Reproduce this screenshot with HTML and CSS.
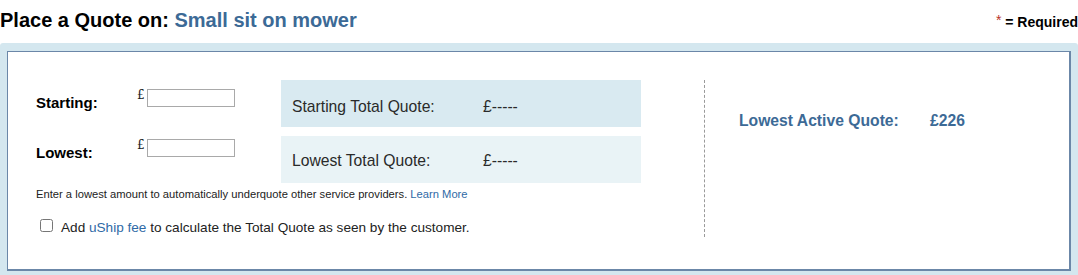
FILE: index.html
```html
<!DOCTYPE html>
<html lang="en">
<head>
    <meta charset="UTF-8">
    <title>Place a Quote</title>
    <link rel="stylesheet" href="styles.css">
</head>
<body>
    <div class="title-bar">
        <h1>Place a Quote on: <span class="item-name">Small sit on mower</span></h1>
        <div class="required"><span class="star">*</span> = Required</div>
    </div>

    <div class="quote-panel">
        <div class="quote-inner">
            <div class="quote-form">
                <div class="quote-grid">
                    <div class="entries">
                        <div class="entry-row">
                            <label class="entry-label" for="starting">Starting:</label>
                            <span class="pound">£</span>
                            <input type="text" id="starting" class="amount">
                        </div>
                        <div class="entry-row">
                            <label class="entry-label" for="lowest">Lowest:</label>
                            <span class="pound">£</span>
                            <input type="text" id="lowest" class="amount">
                        </div>
                    </div>
                    <div class="totals">
                        <div class="total-box total-start">
                            <span class="total-label">Starting Total Quote:</span><span>£-----</span>
                        </div>
                        <div class="total-box total-low">
                            <span class="total-label">Lowest Total Quote:</span><span>£-----</span>
                        </div>
                    </div>
                </div>
                <p class="hint">Enter a lowest amount to automatically underquote other service providers. <a href="#">Learn More</a></p>
                <label class="fee-check">
                    <input type="checkbox">
                    <span>Add <a href="#">uShip fee</a> to calculate the Total Quote as seen by the customer.</span>
                </label>
            </div>
            <div class="active-quote">
                <span class="active-label">Lowest Active Quote:</span><span>£226</span>
            </div>
        </div>
    </div>
</body>
</html>
```

FILE: styles.css
```css
body {
    font-family: "Liberation Sans", Arial, sans-serif;
    margin: 0;
    color: #000;
}
a {
    color: #2f6aa6;
    text-decoration: none;
}

/* titulo */
.title-bar {
    display: flex;
    justify-content: space-between;
    align-items: baseline;
    padding: 8px 0 11px;
}
h1 {
    margin: 0;
    font-size: 20px;
    line-height: 24px;
}
.item-name {
    color: #3c6a96;
}
.required {
    font-size: 14px;
    font-weight: bold;
}
.star {
    color: #b9352a;
    font-weight: normal;
    vertical-align: 2px;
}

/* painel */
.quote-panel {
    background-color: #d4e7ef;
    padding: 8px 7px;
    border-radius: 3px;
}
.quote-inner {
    display: flex;
    background-color: #fff;
    border: solid #6b87a8;
    border-width: 1px 2px 2px 1px;
    padding-bottom: 32px;
}
.quote-form {
    box-sizing: border-box;
    width: 697px;
    margin-top: 28px;
    padding-left: 28px;
    border-right: 1px dashed #9a9a9a;
}
.quote-grid {
    display: flex;
}
.entries {
    width: 245px;
}
.entry-row {
    display: flex;
    align-items: flex-start;
    height: 50px;
    padding-top: 9px;
    box-sizing: border-box;
}
.entry-label {
    width: 101px;
    margin-top: 5px;
    font-size: 15px;
    font-weight: bold;
    line-height: 18px;
}
.pound {
    font-family: "DejaVu Serif", serif;
    font-size: 12px;
    line-height: 13px;
    margin-right: 2px;
    color: #222;
}
.amount {
    box-sizing: border-box;
    width: 88px;
    height: 18px;
    margin: 0;
    padding: 1px 3px;
    border: 1px solid #a9a9a9;
    font-size: 12px;
}

.totals {
    width: 360px;
}
.total-box {
    height: 47px;
    box-sizing: border-box;
    padding: 17px 11px 0;
    font-size: 15.7px;
    line-height: 18px;
    color: #2a2a2a;
    display: flex;
}
.total-start {
    background-color: #d9eaf1;
    padding-top: 18px;
}
.total-low {
    background-color: #e9f3f6;
    margin-top: 9px;
    padding-top: 16px;
}
.total-label {
    width: 191px;
}

.hint {
    margin: 5px 0 0;
    font-size: 11.2px;
    line-height: 13px;
    color: #222;
}
.fee-check {
    display: flex;
    align-items: flex-start;
    margin-top: 18px;
    font-size: 13.6px;
    line-height: 18px;
    color: #222;
}
.fee-check input {
    width: 13px;
    height: 13px;
    margin: 0 8px 0 4px;
}

.active-quote {
    display: flex;
    margin-top: 60px;
    padding-left: 34px;
    font-size: 15.7px;
    font-weight: bold;
    line-height: 18px;
    color: #3c6a96;
    align-self: flex-start;
}
.active-label {
    width: 191px;
}
```
